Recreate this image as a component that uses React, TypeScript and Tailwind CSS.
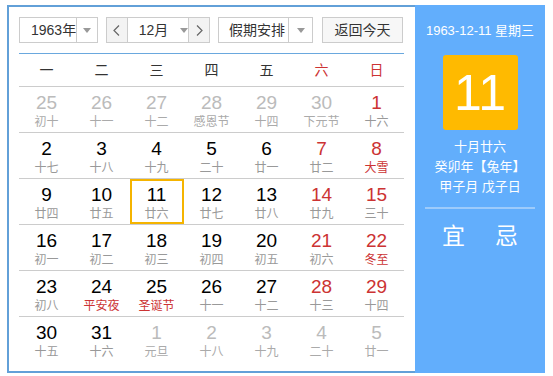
import React from 'react';

type Day = { d: number; l: string; other?: boolean; red?: boolean; fest?: boolean };

const rows: Day[][] = [
  [
    { d: 25, l: '初十', other: true },
    { d: 26, l: '十一', other: true },
    { d: 27, l: '十二', other: true },
    { d: 28, l: '感恩节', other: true },
    { d: 29, l: '十四', other: true },
    { d: 30, l: '下元节', other: true },
    { d: 1, l: '十六', red: true },
  ],
  [
    { d: 2, l: '十七' },
    { d: 3, l: '十八' },
    { d: 4, l: '十九' },
    { d: 5, l: '二十' },
    { d: 6, l: '廿一' },
    { d: 7, l: '廿二', red: true },
    { d: 8, l: '大雪', red: true, fest: true },
  ],
  [
    { d: 9, l: '廿四' },
    { d: 10, l: '廿五' },
    { d: 11, l: '廿六' },
    { d: 12, l: '廿七' },
    { d: 13, l: '廿八' },
    { d: 14, l: '廿九', red: true },
    { d: 15, l: '三十', red: true },
  ],
  [
    { d: 16, l: '初一' },
    { d: 17, l: '初二' },
    { d: 18, l: '初三' },
    { d: 19, l: '初四' },
    { d: 20, l: '初五' },
    { d: 21, l: '初六', red: true },
    { d: 22, l: '冬至', red: true, fest: true },
  ],
  [
    { d: 23, l: '初八' },
    { d: 24, l: '平安夜', fest: true },
    { d: 25, l: '圣诞节', fest: true },
    { d: 26, l: '十一' },
    { d: 27, l: '十二' },
    { d: 28, l: '十三', red: true },
    { d: 29, l: '十四', red: true },
  ],
  [
    { d: 30, l: '十五' },
    { d: 31, l: '十六' },
    { d: 1, l: '元旦', other: true },
    { d: 2, l: '十八', other: true },
    { d: 3, l: '十九', other: true },
    { d: 4, l: '二十', other: true },
    { d: 5, l: '廿一', other: true },
  ],
];

const weekdays = ['一', '二', '三', '四', '五', '六', '日'];

function Caret() {
  return (
    <svg width="8" height="5" viewBox="0 0 8 5">
      <path d="M0 0h8L4 5z" fill="#999" />
    </svg>
  );
}

function Chevron({ dir }: { dir: 'l' | 'r' }) {
  return (
    <svg width="7" height="11" viewBox="0 0 7 11">
      <path
        d={dir === 'l' ? 'M6 0.5L1 5.5l5 5' : 'M1 0.5l5 5-5 5'}
        fill="none"
        stroke="#666"
        strokeWidth="1.2"
      />
    </svg>
  );
}

export default function App() {
  return (
    <div className="pl-[7px] pt-[5px] font-['Liberation_Sans','Noto_Sans_CJK_SC',sans-serif]">
      <div className="flex w-[538px] h-[368px]">
        {/* left calendar */}
        <div className="w-[408px] border-2 border-r-0 border-[#62a0d8] bg-white pl-[10px] pr-[11px] pt-[10px]">
          <div className="flex h-[26px] text-[14px] text-[#333] whitespace-nowrap">
            <div className="flex w-[79px] border border-[#ccc]">
              <div className="flex-1 flex items-center pl-[11px]">1963年</div>
              <div className="w-[24px] border-l border-[#ccc] flex items-center justify-center">
                <Caret />
              </div>
            </div>
            <div className="flex ml-[8px] w-[104px] border border-[#ccc]">
              <div className="w-[22px] bg-[#f3f3f3] border-r border-[#ccc] flex items-center justify-center">
                <Chevron dir="l" />
              </div>
              <div className="flex-1 flex items-center pl-[11px] gap-[12px]">
                <span>12月</span>
                <Caret />
              </div>
              <div className="w-[22px] bg-[#f3f3f3] border-l border-[#ccc] flex items-center justify-center">
                <Chevron dir="r" />
              </div>
            </div>
            <div className="flex ml-[8px] w-[95px] border border-[#ccc]">
              <div className="flex-1 flex items-center pl-[10px]">假期安排</div>
              <div className="w-[24px] border-l border-[#ccc] flex items-center justify-center">
                <Caret />
              </div>
            </div>
            <div className="ml-[9px] w-[81px] border border-[#ccc] bg-[#f7f7f7] flex items-center justify-center">
              返回今天
            </div>
          </div>
          <div className="mt-[10px] h-px bg-[#6aa8de]" />
          <div className="grid grid-cols-7 h-[33px] border-b border-[#ccc] text-[14px]">
            {weekdays.map((w, i) => (
              <div
                key={w}
                className={`flex items-center justify-center ${i >= 5 ? 'text-[#cc3333]' : 'text-[#333]'}`}
              >
                {w}
              </div>
            ))}
          </div>
          {rows.map((row, ri) => (
            <div
              key={ri}
              className={`grid grid-cols-7 h-[46px] ${ri < rows.length - 1 ? 'border-b border-[#ccc]' : ''}`}
            >
              {row.map((c, ci) => {
                const sel = ri === 2 && ci === 2;
                const numColor = c.other ? 'text-[#bbb]' : c.red ? 'text-[#cc3333]' : 'text-black';
                const lunColor = c.other ? 'text-[#aaa]' : c.fest ? 'text-[#cc3333]' : 'text-[#999]';
                return (
                  <div key={ci} className="flex justify-center">
                    <div
                      className={`flex flex-col items-center w-[54px] h-[45px] ${sel ? 'border-2 border-[#f5b400] pt-[3px]' : 'pt-[5px]'}`}
                    >
                      <span className={`text-[19px] leading-[22px] ${numColor}`}>{c.d}</span>
                      <span className={`text-[12px] leading-[16px] ${lunColor}`}>{c.l}</span>
                    </div>
                  </div>
                );
              })}
            </div>
          ))}
        </div>
        {/* right panel */}
        <div className="w-[130px] bg-[#62aefc] flex flex-col items-center text-white">
          <div className="mt-[17px] text-[13px] leading-[18px] whitespace-nowrap">1963-12-11 星期三</div>
          <div className="mt-[15px] w-[75px] h-[75px] rounded-[3px] bg-[#ffba00] flex items-center justify-center text-[50px] leading-none">
            11
          </div>
          <div className="mt-[7px] text-[13px] leading-[20px] text-center">
            <div>十月廿六</div>
            <div>癸卯年【兔年】</div>
            <div>甲子月 戊子日</div>
          </div>
          <div className="mt-[10px] w-[110px] h-[2px] bg-[#9dcbfb]" />
          <div className="mt-[13px] flex gap-[30px] text-[23px] leading-[28px]">
            <span>宜</span>
            <span>忌</span>
          </div>
        </div>
      </div>
    </div>
  );
}
